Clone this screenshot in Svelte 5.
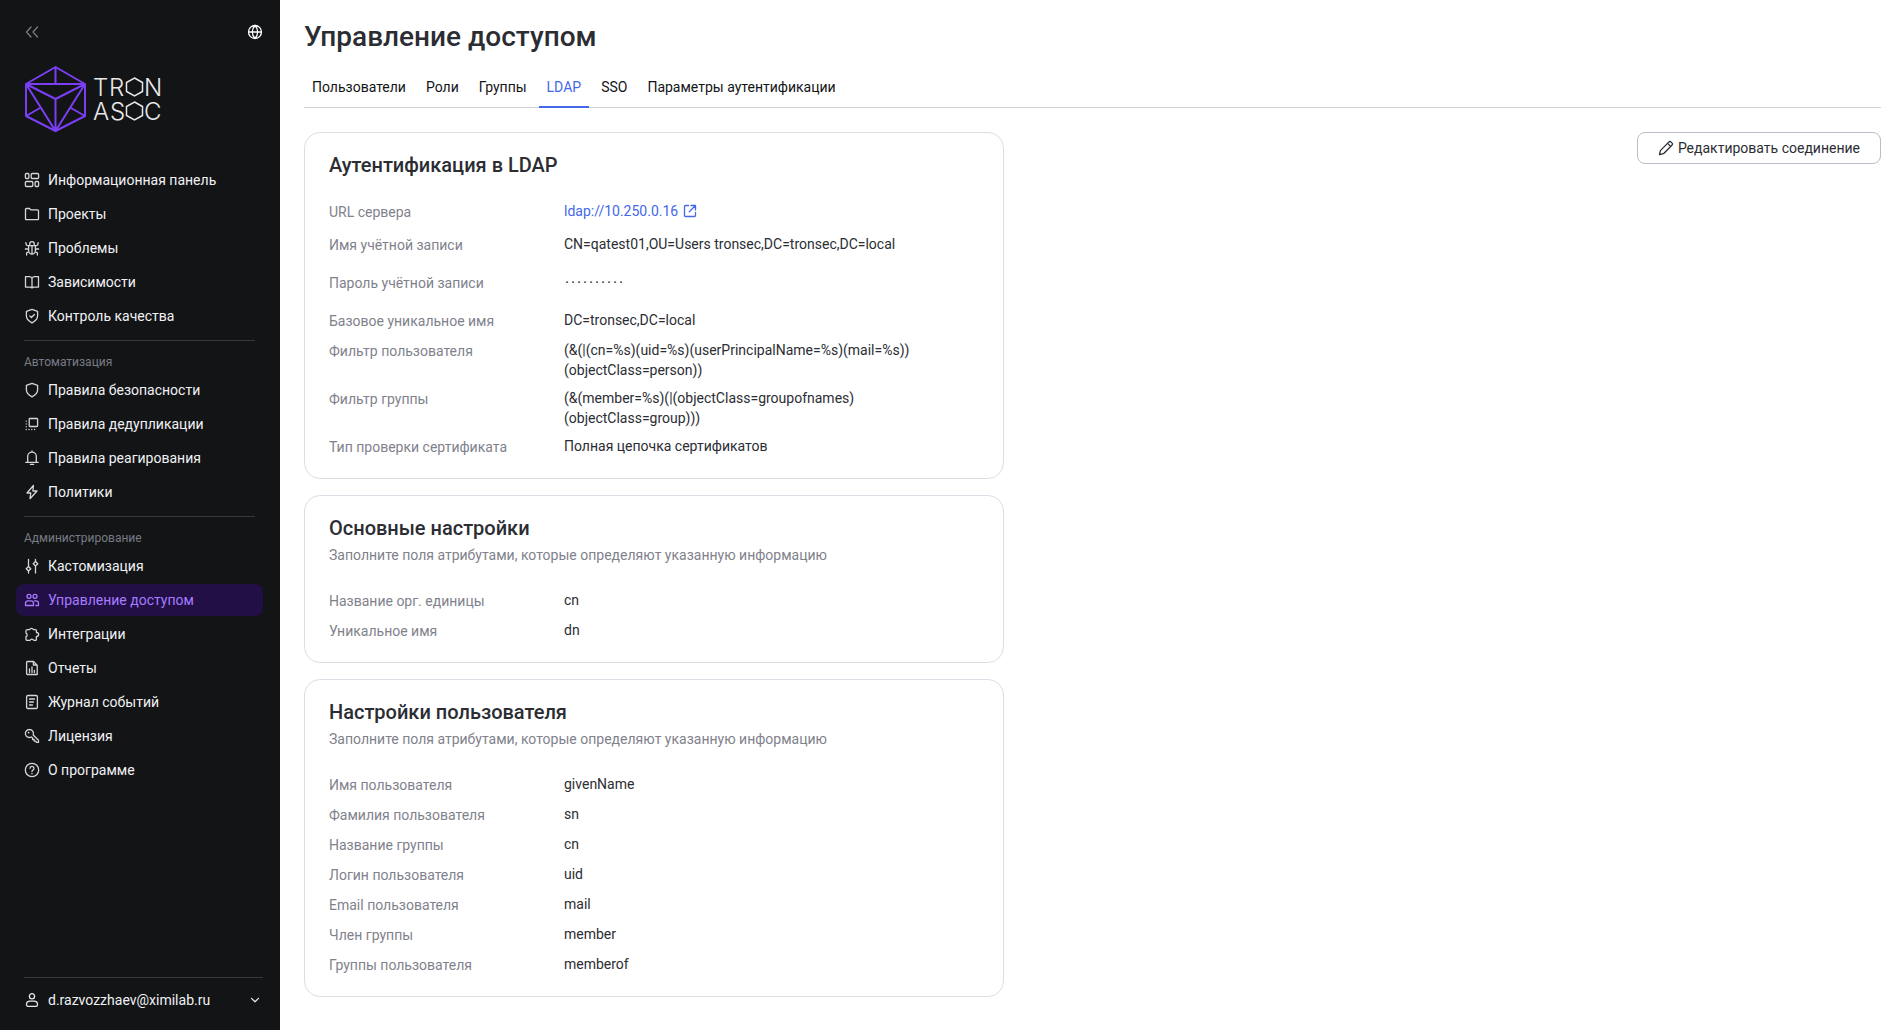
<script>
  // LDAP settings page: access management section of the admin panel.
  const icons = {
    dashboard: 'M2.400 1.500h1.500a1 1 0 0 1 1 1v3a1 1 0 0 1-1 1H2.400a1 1 0 0 1-1-1v-3a1 1 0 0 1 1-1zM8.200 1.500h5.400a1 1 0 0 1 1 1v3a1 1 0 0 1-1 1H8.200a1 1 0 0 1-1-1v-3a1 1 0 0 1 1-1zM2.400 9.500h5.400a1 1 0 0 1 1 1v3a1 1 0 0 1-1 1H2.400a1 1 0 0 1-1-1v-3a1 1 0 0 1 1-1zM12.100 9.500h1.500a1 1 0 0 1 1 1v3a1 1 0 0 1-1 1h-1.500a1 1 0 0 1-1-1v-3a1 1 0 0 1 1-1z',
    folder: 'M1.500 3.300a.8.8 0 0 1 .8-.8h3.200l1.500 1.400h6.700a.8.8 0 0 1 .8.8v8.200a.8.8 0 0 1-.8.8H2.300a.8.8 0 0 1-.8-.8z',
    bug: 'M4.600 5.600h6.800v5a3.400 3.600 0 0 1-6.800 0zM5.700 5.400V4a2.300 2.400 0 0 1 4.600 0v1.400M8 5.600V14M4.600 9H1.400M11.400 9h3.200M4.600 6.300 2.400 5 1.800 2.600M11.400 6.300l2.200-1.300.6-2.400M4.900 11.600l-2.300 1.200V15M11.100 11.600l2.300 1.200V15',
    book: 'M8 4.200C7.400 3.200 6.600 2.700 5.500 2.700H1.500v10.400H6c1 0 1.700.3 2 .9.3-.6 1-.9 2-.9h4.500V2.700h-4C9.400 2.700 8.600 3.200 8 4.200zM8 4.200V14',
    shieldCheck: 'M8 1.300 13.600 3.300v4.500c0 3.200-2.200 5.400-5.600 7-3.400-1.600-5.600-3.800-5.600-7V3.300zM5.800 7.900l1.600 1.600 3-3',
    shield: 'M8 1.300 13.600 3.300v4.500c0 3.200-2.200 5.400-5.600 7-3.400-1.600-5.600-3.800-5.600-7V3.300z',
    copy: 'M6 2.500h6.800a.8.8 0 0 1 .8.8v6.400a.8.8 0 0 1-.8.8H6a.8.8 0 0 1-.8-.8V3.300a.8.8 0 0 1 .8-.8zM2.200 5.200v.1M2.200 8v.1M2.200 10.700v.1M2.200 13.500h.1M5 13.500h.1M7.800 13.500h.1M10.600 13.500h.1',
    bell: 'M3.700 12V6.400a4.300 4.300 0 0 1 8.600 0V12M1.800 12.300h12.400M6.400 14.400h3.200M8 2V1',
    bolt: 'M9.400 1.500 3 9h3.800l-.8 5.700L13 7H8.900z',
    sliders: 'M4.500 1.500v7M4.500 13v2M11.500 1.500v2M11.500 8v7M4.500 8.500l2.300 2.200-2.300 2.300-2.300-2.300zM11.500 3.500l2.300 2.200L11.500 8 9.200 5.700z',
    users: 'M5 2.300a2 2 0 1 1 0 4 2 2 0 0 1 0-4zM11 2.300a2 2 0 1 1 0 4 2 2 0 0 1 0-4zM4 8.800h3a2.500 2.500 0 0 1 2.500 2.500v2.200h-8v-2.200A2.500 2.500 0 0 1 4 8.800zM10.500 8.800H12a2.500 2.500 0 0 1 2.500 2.500v2.200h-2.700',
    puzzle: 'M3.400 3.600h2.200a2 1.800 0 0 1 3.800 0h2a1 1 0 0 1 1 1v1.900a2 1.700 0 0 1 0 3.800v3.100a1 1 0 0 1-1 1H9.700a1.900 1.900 0 0 0-3.600 0H3.200a1.200 1.200 0 0 1-1.200-1.200v-2.500a2 2 0 0 0 0-3.600V4.800a1.200 1.200 0 0 1 1.400-1.200z',
    report: 'M3.500 1.500h6l3.700 3.600v9.400H3.500a.9.9 0 0 1-.9-.9V2.400a.9.9 0 0 1 .9-.9zM9.400 1.600V5H13M5.500 12.500V9M8 12.500V7M10.400 12.500v-2',
    journal: 'M3.800 1.500h8.400a1.200 1.200 0 0 1 1.200 1.200v10.600a1.200 1.200 0 0 1-1.200 1.200H3.800a1.200 1.200 0 0 1-1.200-1.200V2.700a1.200 1.200 0 0 1 1.200-1.200zM5.500 5h5M5.500 8h4M5.500 11h3',
    key: 'M5.500 1.500a4 4 0 1 0 1.800 7.500l1.300 1.100v1.400h1.500l.2 1.600h1.500l.7 1.300h2v-2.200L9.200 7A4 4 0 0 0 5.500 1.500zM4.400 4.400h.4v.4h-.4z',
    help: 'M8 1.300a6.700 6.700 0 1 1 0 13.400A6.700 6.700 0 0 1 8 1.300zM6 6.300a2 2 0 1 1 2.900 1.800c-.6.300-.9.600-.9 1.300M8 11.500v.3',
    user: 'M8 1.600a2.600 2.600 0 1 1 0 5.200 2.600 2.600 0 0 1 0-5.200zM6 9.200h4c2 0 3.500 1.200 3.500 3.200 0 1.200-.5 2-1.500 2H4c-1 0-1.500-.8-1.500-2 0-2 1.500-3.200 3.500-3.200z',
    globe: 'M8 1.500a6.500 6.500 0 1 1 0 13 6.500 6.500 0 0 1 0-13zM1.500 8h13M8 1.500c-3.600 3.800-3.600 9.200 0 13M8 1.500c3.600 3.800 3.600 9.200 0 13',
    collapse: 'M7 3 2.500 8 7 13M13.500 3 9 8l4.500 5',
    chevron: 'M4.500 6.400 8 9.800l3.500-3.400',
    external: 'M6.500 2.500h-3a1 1 0 0 0-1 1v9a1 1 0 0 0 1 1h9a1 1 0 0 0 1-1v-3M9 2.500h4.500V7M13.500 2.500 7.300 8.700',
    pencil: 'M10.700 2.100a1.700 1.700 0 0 1 2.400 0l.8.800a1.700 1.700 0 0 1 0 2.400l-8.400 8.400-4 .9.900-4zM9.600 3.400l3 3'
  };

  const groups = [
    {
      items: [
        { icon: 'dashboard', label: 'Информационная панель' },
        { icon: 'folder', label: 'Проекты' },
        { icon: 'bug', label: 'Проблемы' },
        { icon: 'book', label: 'Зависимости' },
        { icon: 'shieldCheck', label: 'Контроль качества' }
      ]
    },
    {
      title: 'Автоматизация',
      items: [
        { icon: 'shield', label: 'Правила безопасности' },
        { icon: 'copy', label: 'Правила дедупликации' },
        { icon: 'bell', label: 'Правила реагирования' },
        { icon: 'bolt', label: 'Политики' }
      ]
    },
    {
      title: 'Администрирование',
      items: [
        { icon: 'sliders', label: 'Кастомизация' },
        { icon: 'users', label: 'Управление доступом' },
        { icon: 'puzzle', label: 'Интеграции' },
        { icon: 'report', label: 'Отчеты' },
        { icon: 'journal', label: 'Журнал событий' },
        { icon: 'key', label: 'Лицензия' },
        { icon: 'help', label: 'О программе' }
      ]
    }
  ];

  const tabs = ['Пользователи', 'Роли', 'Группы', 'LDAP', 'SSO', 'Параметры аутентификации'];

  const hint = 'Заполните поля атрибутами, которые определяют указанную информацию';
  const cards = [
    {
      title: 'Аутентификация в LDAP',
      rows: [
        { label: 'URL сервера', value: 'ldap://10.250.0.16', kind: 'link' },
        { label: 'Имя учётной записи', value: 'CN=qatest01,OU=Users tronsec,DC=tronsec,DC=local' },
        { label: 'Пароль учётной записи', value: '··········', kind: 'secret' },
        { label: 'Базовое уникальное имя', value: 'DC=tronsec,DC=local' },
        { label: 'Фильтр пользователя', value: '(&(|(cn=%s)(uid=%s)(userPrincipalName=%s)(mail=%s))\n(objectClass=person))' },
        { label: 'Фильтр группы', value: '(&(member=%s)(|(objectClass=groupofnames)\n(objectClass=group)))' },
        { label: 'Тип проверки сертификата', value: 'Полная цепочка сертификатов' }
      ]
    },
    {
      title: 'Основные настройки',
      hint,
      rows: [
        { label: 'Название орг. единицы', value: 'cn' },
        { label: 'Уникальное имя', value: 'dn' }
      ]
    },
    {
      title: 'Настройки пользователя',
      hint,
      rows: [
        { label: 'Имя пользователя', value: 'givenName' },
        { label: 'Фамилия пользователя', value: 'sn' },
        { label: 'Название группы', value: 'cn' },
        { label: 'Логин пользователя', value: 'uid' },
        { label: 'Email пользователя', value: 'mail' },
        { label: 'Член группы', value: 'member' },
        { label: 'Группы пользователя', value: 'memberof' }
      ]
    }
  ];

  let page = $state('Управление доступом');
  let tab = $state('LDAP');
</script>

{#snippet icon(name)}
  <svg class="icon" width="16" height="16" viewBox="0 0 16 16" aria-hidden="true"><path d={icons[name]} /></svg>
{/snippet}

<div class="layout">
  <aside class="sidebar">
    <div class="side-top">
      <button class="icon-btn dim" aria-label="Свернуть меню">{@render icon('collapse')}</button>
      <button class="icon-btn" aria-label="Язык">{@render icon('globe')}</button>
    </div>

    <a class="logo" href="#home" aria-label="TRON ASOC">
      <svg width="140" height="68" viewBox="0 0 140 68">
        <g fill="none" stroke="#7a3ff5" stroke-width="2" stroke-linejoin="round">
          <path d="M31.500 2 61 19v32L31.500 66 2 51V19z" />
          <path d="M2 19h59M31.500 2v17M2 19l29.500 15L61 19M31.500 34v32M2 19l29.500 47L61 19M2 51l14-8M61 51l-14-8" />
        </g>
        <!-- both letters O are the hexagons below -->
        <text class="word"><tspan x="69 85 120" y="31">TRN</tspan><tspan x="69 86 120" y="55">ASC</tspan></text>
        <path d="M110.500 13l8 4.500v9l-8 4.500-8-4.500v-9zM110.500 37l8 4.500v9l-8 4.500-8-4.500v-9z" fill="none" stroke="#e8e8ea" stroke-width="1.500" />
      </svg>
    </a>

    <nav class="nav">
      {#each groups as group}
        {#if group.title}
          <hr />
          <div class="group-title">{group.title}</div>
        {/if}
        <ul>
          {#each group.items as item}
            <li>
              <a class="nav-item" class:active={page === item.label} href="#nav" onclick={() => (page = item.label)}>
                {@render icon(item.icon)}
                <span>{item.label}</span>
              </a>
            </li>
          {/each}
        </ul>
      {/each}
    </nav>

    <div class="side-bottom">
      <button class="account">
        {@render icon('user')}
        <span class="email">d.razvozzhaev@ximilab.ru</span>
        {@render icon('chevron')}
      </button>
    </div>
  </aside>

  <main class="main">
    <h1>Управление доступом</h1>

    <div class="tabs" role="tablist">
      {#each tabs as name}
        <button class="tab" class:active={tab === name} role="tab" aria-selected={tab === name} onclick={() => (tab = name)}>{name}</button>
      {/each}
    </div>

    <div class="content">
      <div class="cards">
        {#each cards as card}
          <section class="card">
            <h2>{card.title}</h2>
            {#if card.hint}<p class="hint">{card.hint}</p>{/if}
            <dl>
              {#each card.rows as row}
                <div class="row {row.kind ?? ''}">
                  <dt>{row.label}</dt>
                  <dd>
                    {#if row.kind === 'link'}
                      <a href={row.value}>{row.value}{@render icon('external')}</a>
                    {:else}{row.value}{/if}
                  </dd>
                </div>
              {/each}
            </dl>
          </section>
        {/each}
      </div>

      <button class="edit">{@render icon('pencil')}Редактировать соединение</button>
    </div>
  </main>
</div>

<style>
  :global(body) { background: #fff; }
  .layout { display: flex; min-height: 100vh; font-family: Roboto, "Liberation Sans", sans-serif; font-size: 14px; line-height: 20px; color: #2b2d33; }
  button { font: inherit; color: inherit; background: none; border: 0; padding: 0; cursor: pointer; }
  a { text-decoration: none; }
  .icon { flex: none; fill: none; stroke: currentColor; stroke-width: 1.3; stroke-linejoin: round; stroke-linecap: round; }

  /* SIDEBAR */
  .sidebar { flex: none; box-sizing: border-box; width: 280px; padding: 24px 16px 14px; border-right: 1px solid #131416; background: #131416; color: #e6e8ec; display: flex; flex-direction: column; }
  .side-top { display: flex; justify-content: space-between; padding-left: 8px; }
  .icon-btn { display: flex; color: #fff; }
  .icon-btn.dim { color: #777b86; }
  .logo { display: flex; margin: 25px 8px 31px; }
  .word { font-family: Inter, sans-serif; font-size: 24px; font-weight: 300; fill: #e8e8ea; }
  .nav { flex: 1; }
  ul { list-style: none; margin: 0; padding: 0; display: flex; flex-direction: column; gap: 2px; }
  .nav-item { height: 32px; padding: 0 8px; border-radius: 8px; display: flex; align-items: center; gap: 8px; color: #f0f1f4; }
  .nav-item .icon { color: #d4d6dc; }
  .nav-item.active, .nav-item.active .icon { color: #a67cff; }
  .nav-item.active { background: #220f45; }
  hr { height: 1px; border: 0; margin: 8px 8px 11px; background: #37393d; }
  .group-title { padding: 0 8px; margin-bottom: 2px; font-size: 12px; color: #777b86; }
  .side-bottom { border-top: 1px solid #37393d; margin-left: 8px; padding-top: 6px; }
  .account { width: 100%; height: 32px; display: flex; align-items: center; gap: 8px; text-align: left; }
  .email { flex: 1; color: #f0f1f4; }

  /* MAIN */
  .main { flex: 1; min-width: 0; padding: 16px 20px 24px 24px; }
  h1 { margin: 0 0 10px; font-size: 28px; line-height: 42px; font-weight: 500; }
  .tabs { display: flex; gap: 4px; box-shadow: inset 0 -1px #d0d2da; }
  .tab { height: 40px; padding: 0 8px; border-bottom: 2px solid transparent; color: #131416; }
  .tab.active { color: #4468e8; border-bottom-color: #4468e8; }
  .content { margin-top: 24px; display: flex; justify-content: space-between; align-items: flex-start; gap: 24px; }

  /* CARDS */
  .cards { flex: 0 1 700px; display: flex; flex-direction: column; gap: 16px; }
  .card { border: 1px solid #dcdee6; border-radius: 16px; padding: 20px 24px; }
  h2 { margin: 0; font-size: 20px; line-height: 24px; font-weight: 500; }
  .hint { margin: 4px 0 0; line-height: 22px; color: #7f828c; }
  dl { margin: 24px 0 0; display: flex; flex-direction: column; gap: 8px; }
  .row { display: grid; grid-template-columns: 235px 1fr; align-items: start; }
  dt { line-height: 22px; color: #7f828c; }
  dd { margin: 0; white-space: pre-line; }
  .link { min-height: 25px; }
  .link a { display: flex; align-items: center; gap: 4px; color: #4468e8; }
  .secret { min-height: 38px; align-items: center; }
  .secret dd { font-family: "Liberation Mono", monospace; font-size: 10px; font-weight: 700; }

  .edit { flex: none; height: 32px; padding: 0 20px; border: 1px solid #babdca; border-radius: 8px; display: flex; align-items: center; gap: 4px; }
</style>
